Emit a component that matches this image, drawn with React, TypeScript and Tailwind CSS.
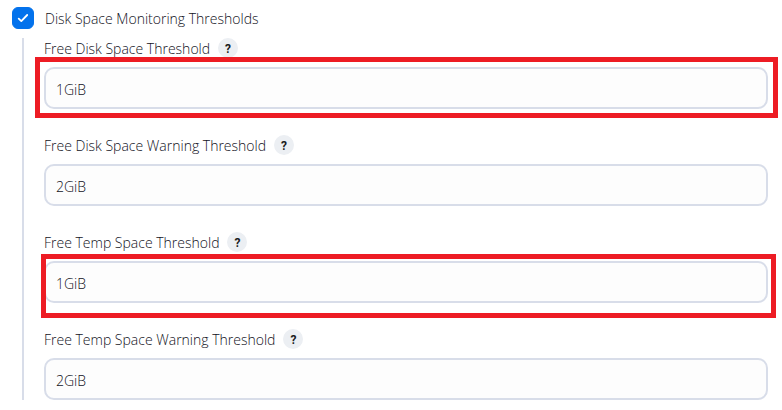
import { useState } from "react";

type Field = {
  id: string;
  label: string;
  value: string;
  highlight?: string;
};

const fields: Field[] = [
  {
    id: "free-disk",
    label: "Free Disk Space Threshold",
    value: "1GiB",
    highlight: "-left-[9px] -right-[10px] -top-[10px] -bottom-[9px]",
  },
  { id: "free-disk-warning", label: "Free Disk Space Warning Threshold", value: "2GiB" },
  {
    id: "free-temp",
    label: "Free Temp Space Threshold",
    value: "1GiB",
    highlight: "-left-[3px] -right-[8px] -top-[7px] -bottom-[15px]",
  },
  { id: "free-temp-warning", label: "Free Temp Space Warning Threshold", value: "2GiB" },
];

function ThresholdField({ id, label, value, highlight }: Field) {
  return (
    <div className="flex flex-col gap-[9px]">
      <div className="flex h-5 items-center gap-2">
        <label htmlFor={id} className="pt-0.5 leading-[18px]">
          {label}
        </label>
        <button
          type="button"
          aria-label={`Help: ${label}`}
          className="flex size-5 items-center justify-center rounded-full bg-[#eceff3] pt-px font-[Roboto,sans-serif] text-xs leading-4 font-bold text-[#1a1c21]"
        >
          ?
        </button>
      </div>
      <div className="relative">
        <input
          id={id}
          type="text"
          defaultValue={value}
          className="block h-[42px] w-full rounded-[10px] border-2 border-[#d8dde9] bg-[#fdfdfd] px-2.5 pt-0.5 outline-none"
        />
        {highlight && (
          <div className={`pointer-events-none absolute border-5 border-[#ed1c24] ${highlight}`} />
        )}
      </div>
    </div>
  );
}

export default function App() {
  const [enabled, setEnabled] = useState(true);

  return (
    <main className="bg-white py-[7px] pr-3.5 pl-3 font-['Open_Sans','Noto_Sans',sans-serif] text-sm font-light text-[#12121c]">
      <div className="flex h-[22px] items-center gap-[11px]">
        <span className="relative flex size-[22px]">
          <input
            id="disk-monitoring"
            type="checkbox"
            checked={enabled}
            onChange={(e) => setEnabled(e.target.checked)}
            className="size-[22px] appearance-none rounded-md border border-[#d8dde9] bg-white checked:border-[#0372ec] checked:bg-[#0372ec]"
          />
          <svg
            viewBox="0 0 22 22"
            fill="none"
            stroke="white"
            strokeWidth="1.8"
            strokeLinecap="round"
            strokeLinejoin="round"
            className="pointer-events-none absolute inset-0"
          >
            <path d="M6.7 11.6 9.3 14.1 15.2 8" />
          </svg>
        </span>
        <label htmlFor="disk-monitoring" className="pt-0.5 leading-[18px]">
          Disk Space Monitoring Thresholds
        </label>
      </div>
      <section className="mt-[9px] ml-2.5 flex flex-col gap-[26px] border-l-2 border-[#d8dde9] pl-5">
        {fields.map((field) => (
          <ThresholdField key={field.id} {...field} />
        ))}
      </section>
    </main>
  );
}
